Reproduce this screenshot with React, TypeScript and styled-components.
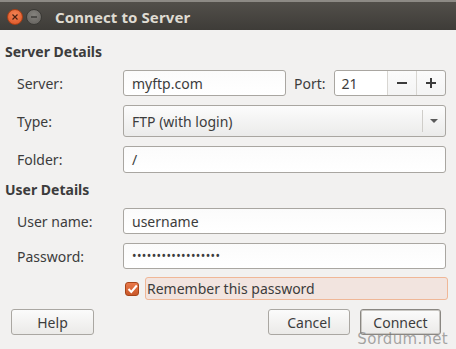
import React from 'react';
import styled, { createGlobalStyle } from 'styled-components';

const GlobalStyle = createGlobalStyle`
  html, body {
    margin: 0;
    padding: 0;
    background: #f2f1f0;
  }
  body {
    font-family: 'Noto Sans', 'DejaVu Sans', sans-serif;
    color: #3c3c3c;
  }
`;

const Window = styled.div`
  width: 456px;
  height: 349px;
  background: #f2f1f0;
  overflow: hidden;
  position: relative;
`;

const TitleBar = styled.div`
  height: 30px;
  box-sizing: border-box;
  display: flex;
  align-items: center;
  padding: 2px 0 0 7px;
  background: linear-gradient(#524f4a, #3e3c38);
  border-top: 2px solid #8d8a85;
`;

const WinButton = styled.div<{ $close?: boolean }>`
  width: 16px;
  height: 16px;
  border-radius: 50%;
  margin-right: 3px;
  display: flex;
  align-items: center;
  justify-content: center;
  box-sizing: border-box;
  border: 1px solid ${(p) => (p.$close ? '#a94016' : '#3a3935')};
  background: ${(p) =>
    p.$close
      ? 'radial-gradient(circle at 50% 35%, #f38454, #dd5224)'
      : 'radial-gradient(circle at 50% 35%, #84827d, #625f5b)'};
`;

const Title = styled.div`
  margin-left: 10px;
  font-size: 15px;
  font-weight: bold;
  color: #dfdbd2;
  letter-spacing: 0.1px;
`;

const Body = styled.div`
  padding: 12px 10px 0 5px;
  display: flex;
  flex-direction: column;
`;

const Heading = styled.div<{ $mt?: number }>`
  font-size: 14px;
  font-weight: bold;
  line-height: 20px;
  height: 20px;
  margin-top: ${(p) => p.$mt ?? 0}px;
`;

const Row = styled.div<{ $mt: number; $h: number }>`
  display: grid;
  grid-template-columns: 118px 1fr;
  align-items: center;
  margin-top: ${(p) => p.$mt}px;
  height: ${(p) => p.$h}px;
`;

const Label = styled.div`
  padding-left: 12px;
  font-size: 14px;
`;

const Field = styled.div`
  height: 100%;
  box-sizing: border-box;
  border: 1px solid #a9a6a1;
  border-radius: 3px;
  background: linear-gradient(#fbfbfb, #ffffff);
  display: flex;
  align-items: center;
  padding-left: 8px;
  font-size: 14px;
  color: #3c3c3c;
`;

const Dots = styled.span`
  font-size: 12px;
  letter-spacing: 0.4px;
  position: relative;
  top: -1px;
`;

const ServerLine = styled.div`
  display: flex;
  align-items: center;
  height: 100%;
`;

const ServerField = styled(Field)`
  width: 163px;
`;

const PortLabel = styled.span`
  margin-left: 8px;
  margin-right: 8px;
  font-size: 14px;
`;

const Spin = styled.div`
  flex: 1;
  height: 100%;
  box-sizing: border-box;
  border: 1px solid #a9a6a1;
  border-radius: 3px;
  background: linear-gradient(#fbfbfb, #f4f4f4);
  display: flex;
  align-items: stretch;
  font-size: 14px;
`;

const SpinValue = styled.div`
  flex: 1;
  display: flex;
  align-items: center;
  padding-left: 7px;
  background: #fff;
  border-radius: 3px 0 0 3px;
`;

const SpinBtn = styled.div`
  width: 28px;
  display: flex;
  align-items: center;
  justify-content: center;
  border-left: 1px solid #d8d6d2;
`;

const Combo = styled.div`
  height: 100%;
  box-sizing: border-box;
  border: 1px solid #a9a6a1;
  border-radius: 3px;
  background: linear-gradient(#fcfcfc, #ebebea);
  display: flex;
  align-items: center;
  font-size: 14px;
`;

const ComboText = styled.div`
  flex: 1;
  padding-left: 8px;
`;

const ComboArrow = styled.div`
  width: 22px;
  height: 22px;
  border-left: 1px solid #cfcdc9;
  display: flex;
  align-items: center;
  justify-content: center;
`;

const CheckRow = styled.div`
  display: flex;
  align-items: center;
  margin-top: 8px;
  height: 23px;
  padding-left: 120px;
`;

const CheckBox = styled.div`
  width: 14px;
  height: 14px;
  box-sizing: border-box;
  border-radius: 3px;
  background: linear-gradient(#e9794a, #c9582a);
  border: 1px solid #a64419;
  display: flex;
  align-items: center;
  justify-content: center;
  margin-right: 6px;
`;

const CheckLabel = styled.div`
  flex: 1;
  height: 100%;
  box-sizing: border-box;
  margin-right: -2px;
  border: 1px solid #f0b797;
  border-radius: 3px;
  background: #f2e4df;
  display: flex;
  align-items: center;
  padding-left: 1px;
  font-size: 14px;
`;

const ButtonBar = styled.div`
  display: flex;
  margin-top: 9px;
  height: 26px;
  padding-left: 6px;
`;

const Button = styled.div<{ $w: number; $default?: boolean }>`
  width: ${(p) => p.$w}px;
  height: 100%;
  box-sizing: border-box;
  border: 1px solid ${(p) => (p.$default ? '#8a8782' : '#aaa7a2')};
  box-shadow: ${(p) => (p.$default ? 'inset 0 0 0 1px #c9c7c3' : 'none')};
  border-radius: 3px;
  background: linear-gradient(#fbfbfb, #ebeae8);
  display: flex;
  align-items: center;
  justify-content: center;
  font-size: 14px;
  margin-left: ${(p) => (p.$default ? 10 : 0)}px;
  margin-right: ${(p) => (p.$default ? 5 : 0)}px;
`;

const Spacer = styled.div`
  flex: 1;
`;

const Watermark = styled.div`
  position: absolute;
  right: 8px;
  bottom: 1px;
  font-size: 15px;
  font-family: 'DejaVu Sans', sans-serif;
  color: rgba(110, 110, 110, 0.6);
  letter-spacing: 0.3px;
`;

export default function App() {
  return (
    <Window>
      <GlobalStyle />
      <TitleBar>
        <WinButton $close>
          <svg width="8" height="8" viewBox="0 0 8 8">
            <path d="M1.5 1.5 L6.5 6.5 M6.5 1.5 L1.5 6.5" stroke="#4a2012" strokeWidth="1.2" />
          </svg>
        </WinButton>
        <WinButton>
          <svg width="8" height="8" viewBox="0 0 8 8">
            <path d="M1 4 H7" stroke="#3a3935" strokeWidth="1.4" />
          </svg>
        </WinButton>
        <Title>Connect to Server</Title>
      </TitleBar>
      <Body>
        <Heading>Server Details</Heading>
        <Row $mt={8} $h={26}>
          <Label>Server:</Label>
          <ServerLine>
            <ServerField>myftp.com</ServerField>
            <PortLabel>Port:</PortLabel>
            <Spin>
              <SpinValue>21</SpinValue>
              <SpinBtn>
                <svg width="12" height="12" viewBox="0 0 12 12">
                  <path d="M1 6 H11" stroke="#3c3c3c" strokeWidth="2" />
                </svg>
              </SpinBtn>
              <SpinBtn>
                <svg width="12" height="12" viewBox="0 0 12 12">
                  <path d="M1 6 H11 M6 1 V11" stroke="#3c3c3c" strokeWidth="2" />
                </svg>
              </SpinBtn>
            </Spin>
          </ServerLine>
        </Row>
        <Row $mt={9} $h={32}>
          <Label>Type:</Label>
          <Combo>
            <ComboText>FTP (with login)</ComboText>
            <ComboArrow>
              <svg width="8" height="6" viewBox="0 0 8 6">
                <path d="M0 1 H8 L4 5 Z" fill="#5a5a5a" />
              </svg>
            </ComboArrow>
          </Combo>
        </Row>
        <Row $mt={9} $h={27}>
          <Label>Folder:</Label>
          <Field>/</Field>
        </Row>
        <Heading $mt={7}>User Details</Heading>
        <Row $mt={8} $h={26}>
          <Label>User name:</Label>
          <Field>username</Field>
        </Row>
        <Row $mt={9} $h={26}>
          <Label>Password:</Label>
          <Field>
            <Dots>••••••••••••••••••</Dots>
          </Field>
        </Row>
        <CheckRow>
          <CheckBox>
            <svg width="11" height="10" viewBox="0 0 11 10">
              <path d="M1.5 5 L4.3 8 L9.8 1.5" stroke="#fff" strokeWidth="2" fill="none" />
            </svg>
          </CheckBox>
          <CheckLabel>Remember this password</CheckLabel>
        </CheckRow>
        <ButtonBar>
          <Button $w={83}>Help</Button>
          <Spacer />
          <Button $w={82}>Cancel</Button>
          <Button $w={81} $default>
            Connect
          </Button>
        </ButtonBar>
      </Body>
      <Watermark>Sordum.net</Watermark>
    </Window>
  );
}
